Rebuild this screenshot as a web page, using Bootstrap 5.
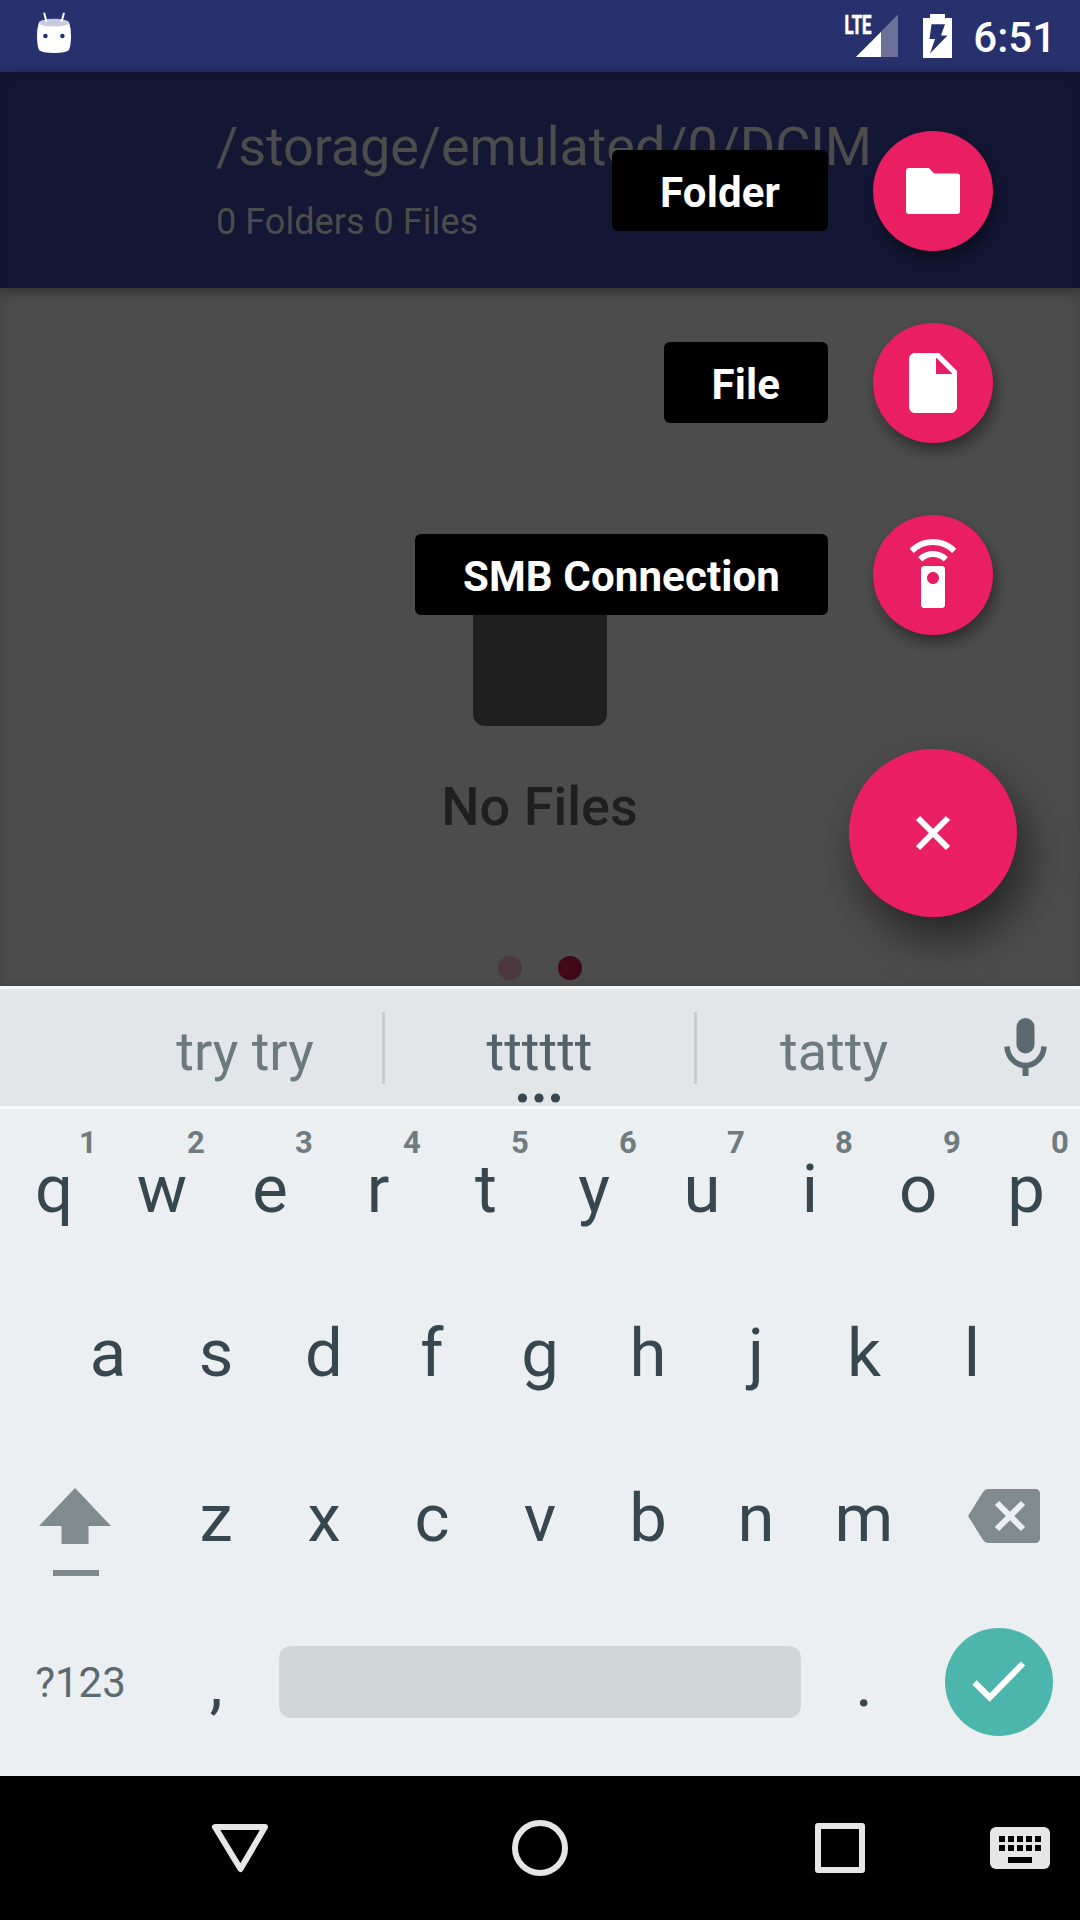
<!DOCTYPE html>
<html lang="en">
<head>
<meta charset="utf-8">
<meta name="viewport" content="width=device-width, initial-scale=1">
<title>Files</title>
<link rel="stylesheet" href="https://cdn.jsdelivr.net/npm/bootstrap@5.3.0/dist/css/bootstrap.min.css">
<style>
  body { font-family: Roboto, "Noto Sans", sans-serif; background: #000; line-height: 1; }
  .phone { width: 1080px; height: 1920px; }
  svg { display: block; flex: none; }
  .status-bar { height: 72px; background: #27316d; padding: 0 24px 0 36px; }
  .status-bar .clock { font-size: 42px; font-weight: 500; margin-left: 20px; padding-top: 3px; }
  .status-bar .battery { margin-left: 24px; }
  .app { height: 914px; background: #4c4c4c; }
  .toolbar-top { height: 216px; background: #131734; color: #4c4c4c; padding: 48px 0 0 216px; box-shadow: 0 3px 12px rgba(0,0,0,.4); }
  .path-title { font-size: 54px; line-height: 54px; white-space: nowrap; letter-spacing: -.1px; }
  .path-sub { font-size: 36px; line-height: 36px; margin-top: 30px; letter-spacing: .05px; }
  .empty { padding-top: 265px; color: #1f1f1f; }
  .empty-icon { width: 134px; height: 173px; border-radius: 12px; background: #1f1f1f; }
  .empty-text { font-size: 54px; font-weight: 500; line-height: 54px; margin-top: 54px; padding-right: 1px; }
  .pager { gap: 36px; margin-top: 122px; }
  .dot { width: 24px; height: 24px; border-radius: 50%; background: #4c383e; }
  .dot.on { background: #42081a; }
  .speed-dial { position: absolute; inset: 0; padding: 59px 63px 0 0; box-shadow: inset 0 0 14px rgba(0,0,0,.12); overflow: hidden; }
  .dial-row { gap: 45px; margin-bottom: 72px; padding-right: 24px; }
  .dial-label { background: #000; color: #fff; height: 81px; margin-bottom: 1px; padding: 4px 48px 0; border-radius: 6px; font-size: 42px; font-weight: 700; white-space: nowrap; letter-spacing: .13px; }
  .fab { border-radius: 50%; background: #e91e63; width: 120px; height: 120px; box-shadow: 3px 8px 14px rgba(0,0,0,.4); }
  .fab.main { width: 168px; height: 168px; margin-top: 42px; box-shadow: 10px 22px 42px rgba(0,0,0,.5); }
  .suggest { height: 120px; background: #e2e6e9; border-top: 3px solid #f3f5f6; color: #6c797f; font-size: 54px; padding: 0 0 0 108px; }
  .sug { padding-top: 8px; }
  .sug.first { width: 274px; padding-right: 0; }
  .sug.mid { width: 309px; color: #51626a; }
  .sug.last { width: 274px; }
  .sep { width: 3px; height: 72px; background: #c8cdd0; margin-top: 23px; }
  .more { position: absolute; left: 0; right: 2px; top: 104px; }
  .keyboard { height: 670px; background: #ebeff2; border-top: 3px solid #f7f9fa; color: #37474f; }
  .krow { height: 165px; }
  .krow.r1 { height: 162px; padding-bottom: 2px; }
  .key { width: 108px; font-size: 67px; position: relative; }
  .hint { position: absolute; left: 79px; top: 18px; width: 18px; font-size: 31px; font-weight: 700; color: #6e7b80; display: flex; justify-content: center; }
  .key.wide { width: 162px; }
  .key.sym { font-size: 42px; color: #5b6a71; padding-right: 1px; padding-bottom: 2px; }
  .space { width: 522px; height: 72px; border-radius: 12px; background: #d0d5d8; margin: 0 9px 3px; }
  .enter { width: 108px; height: 108px; border-radius: 50%; background: #4db6ac; margin-bottom: 3px; }
  .nav-row { height: 144px; background: #000; }
</style>
<script src="https://cdn.jsdelivr.net/npm/bootstrap@5.3.0/dist/js/bootstrap.bundle.min.js"></script>
</head>
<body>
<div class="phone d-flex flex-column overflow-hidden">
  <header class="status-bar d-flex align-items-center text-white">
    <svg width="36" height="72" viewBox="36 0 36 72"><path d="M39 22Q54 17 69 22Q71 28 71 36Q71 45 69 50Q66 53 54 53Q42 53 39 50Q37 45 37 36Q37 28 39 22Z" fill="#fff"/><ellipse cx="54" cy="22.7" rx="15" ry="3.9" fill="#c9cadd"/><path d="M44.3 13.5l2 7.5M63.8 13.5l-2 7.5" stroke="#fff" stroke-width="2" stroke-linecap="round"/><circle cx="45.4" cy="36" r="2.3" fill="#27316d"/><circle cx="62.4" cy="36" r="2.3" fill="#27316d"/></svg>
    <svg class="ms-auto" width="56" height="72" viewBox="843 0 56 72"><path d="M898 14.500V57H856Z" fill="#6b7199"/><path d="M881 32V57H856Z" fill="#fff"/><text x="844.500" y="33.500" font-size="26" font-weight="700" textLength="27" lengthAdjust="spacingAndGlyphs" fill="#fff" stroke="#fff" stroke-width=".7">LTE</text></svg>
    <svg class="battery" width="30" height="72" viewBox="923 0 30 72"><path d="M923 18h7v-4h15v4h7v40h-29Z" fill="#fff"/><path d="M931.500 24.300H945L941 35.500h6.500L930 53.500 935 39h-5.500Z" fill="#27316d"/></svg>
    <span class="clock">6:51</span>
  </header>

  <main class="app position-relative">
    <div class="toolbar-top">
      <div class="path-title">/storage/emulated/0/DCIM</div>
      <div class="path-sub">0 Folders 0 Files</div>
    </div>
    <div class="empty d-flex flex-column align-items-center">
      <div class="empty-icon"></div>
      <div class="empty-text">No Files</div>
      <div class="pager d-flex"><span class="dot"></span><span class="dot on"></span></div>
    </div>
    <div class="speed-dial d-flex flex-column align-items-end">
      <div class="dial-row d-flex align-items-center">
        <div class="dial-label d-flex align-items-center">Folder</div>
        <div class="fab d-flex align-items-center justify-content-center"><svg width="54" height="46" viewBox="0 0 54 46"><path d="M3 0H23L28 5.500H51Q54 5.500 54 8.500V43Q54 46 51 46H3Q0 46 0 43V3Q0 0 3 0Z" fill="#fff"/></svg></div>
      </div>
      <div class="dial-row d-flex align-items-center">
        <div class="dial-label d-flex align-items-center">File</div>
        <div class="fab d-flex align-items-center justify-content-center"><svg width="72" height="72" viewBox="0 0 24 24"><path d="M6 2c-1.100 0-1.990.9-1.990 2L4 20c0 1.100.89 2 1.990 2H18c1.100 0 2-.9 2-2V8l-6-6H6zm7 7V3.500L18.500 9H13z" fill="#fff"/></svg></div>
      </div>
      <div class="dial-row d-flex align-items-center">
        <div class="dial-label d-flex align-items-center">SMB Connection</div>
        <div class="fab d-flex align-items-center justify-content-center"><svg width="72" height="72" viewBox="0 0 24 24"><path d="M15 9H9c-.55 0-1 .45-1 1v12c0 .55.45 1 1 1h6c.55 0 1-.45 1-1V10c0-.55-.45-1-1-1zm-3 6c-1.100 0-2-.9-2-2s.9-2 2-2 2 .9 2 2-.9 2-2 2zM7.050 6.050l1.410 1.410C9.370 6.560 10.620 6 12 6s2.630.56 3.540 1.460l1.410-1.410C15.680 4.780 13.930 4 12 4s-3.680.78-4.950 2.050zM12 0C8.960 0 6.210 1.230 4.220 3.220l1.410 1.410C7.260 3.010 9.510 2 12 2s4.740 1.010 6.360 2.640l1.410-1.410C17.790 1.230 15.040 0 12 0z" fill="#fff"/></svg></div>
      </div>
      <div class="fab main d-flex align-items-center justify-content-center"><svg width="36" height="36" viewBox="0 0 36 36"><path d="M3 3L33 33M33 3L3 33" stroke="#fff" stroke-width="6"/></svg></div>
    </div>
  </main>

  <section class="suggest d-flex position-relative">
    <div class="sug first d-flex align-items-center justify-content-center">try try</div>
    <div class="sep"></div>
    <div class="sug mid d-flex align-items-center justify-content-center">tttttt</div>
    <div class="sep"></div>
    <div class="sug last d-flex align-items-center justify-content-center">tatty</div>
    <div class="flex-fill d-flex justify-content-center"><svg width="44" height="117" viewBox="1003.500 990 44 117" fill="none" stroke="#5b6a70"><path d="M1025 1028V1045.500" stroke-width="18" stroke-linecap="round"/><path d="M1006.500 1047.500C1007 1058 1015 1066.500 1025 1066.500S1043 1058 1043.500 1047.500" stroke-width="5.500"/><path d="M1025 1066V1077" stroke-width="6"/></svg></div>
    <div class="more d-flex justify-content-center"><svg width="44" height="10" fill="#37474f"><circle cx="5.500" cy="5" r="4.600"/><circle cx="22" cy="5" r="4.600"/><circle cx="38.500" cy="5" r="4.600"/></svg></div>
  </section>

  <section class="keyboard">
    <div class="krow r1 d-flex align-items-center text-center">
      <div class="key align-self-stretch d-flex align-items-center justify-content-center">q<span class="hint">1</span></div>
      <div class="key align-self-stretch d-flex align-items-center justify-content-center">w<span class="hint">2</span></div>
      <div class="key align-self-stretch d-flex align-items-center justify-content-center">e<span class="hint">3</span></div>
      <div class="key align-self-stretch d-flex align-items-center justify-content-center">r<span class="hint">4</span></div>
      <div class="key align-self-stretch d-flex align-items-center justify-content-center">t<span class="hint">5</span></div>
      <div class="key align-self-stretch d-flex align-items-center justify-content-center">y<span class="hint">6</span></div>
      <div class="key align-self-stretch d-flex align-items-center justify-content-center">u<span class="hint">7</span></div>
      <div class="key align-self-stretch d-flex align-items-center justify-content-center">i<span class="hint">8</span></div>
      <div class="key align-self-stretch d-flex align-items-center justify-content-center">o<span class="hint">9</span></div>
      <div class="key align-self-stretch d-flex align-items-center justify-content-center">p<span class="hint">0</span></div>
    </div>
    <div class="krow d-flex align-items-center justify-content-center text-center">
      <div class="key">a</div><div class="key">s</div><div class="key">d</div><div class="key">f</div><div class="key">g</div><div class="key">h</div><div class="key">j</div><div class="key">k</div><div class="key">l</div>
    </div>
    <div class="krow d-flex align-items-center text-center">
      <div class="key wide"><svg width="162" height="165" viewBox="0 1436 162 165" fill="#808b8f"><path d="M75 1488L111 1526H88.500V1544H61.500V1526H39Z"/><path d="M53 1570h46v6H53z"/></svg></div>
      <div class="key">z</div><div class="key">x</div><div class="key">c</div><div class="key">v</div><div class="key">b</div><div class="key">n</div><div class="key">m</div>
      <div class="key wide"><svg width="162" height="165" viewBox="918 1436 162 165"><path d="M988 1489H1035Q1040 1489 1040 1494V1538Q1040 1543 1035 1543H988Q985 1543 983 1540L968 1516 983 1492Q985 1489 988 1489Z" fill="#808b8f"/><path d="M997 1503l26 26M1023 1503l-26 26" stroke="#ebeff2" stroke-width="6"/></svg></div>
    </div>
    <div class="krow d-flex align-items-center text-center">
      <div class="key wide sym">?123</div>
      <div class="key">,</div>
      <div class="space"></div>
      <div class="key">.</div>
      <div class="key wide d-flex justify-content-center"><div class="enter"><svg width="108" height="108" viewBox="945 1628 108 108"><path d="M974.500 1682.500L989.700 1697.500 1023 1663.500" fill="none" stroke="#fff" stroke-width="6"/></svg></div></div>
    </div>
  </section>

  <footer class="nav-row">
    <svg width="1080" height="144" viewBox="0 1776 1080 144" fill="none" stroke="#e6e6e6" stroke-width="6" stroke-linejoin="round"><path d="M215 1827H265L240.500 1869Z"/><circle cx="540" cy="1848" r="25"/><path d="M818 1826h44v44h-44z"/><rect x="990" y="1827" width="60" height="42" rx="6" fill="#e6e6e6" stroke="none"/><path d="M999 1839h42M999 1848h42" stroke="#000" stroke-dasharray="6 3"/><path d="M1008 1860h24" stroke="#000"/></svg>
  </footer>
</div>
</body>
</html>
